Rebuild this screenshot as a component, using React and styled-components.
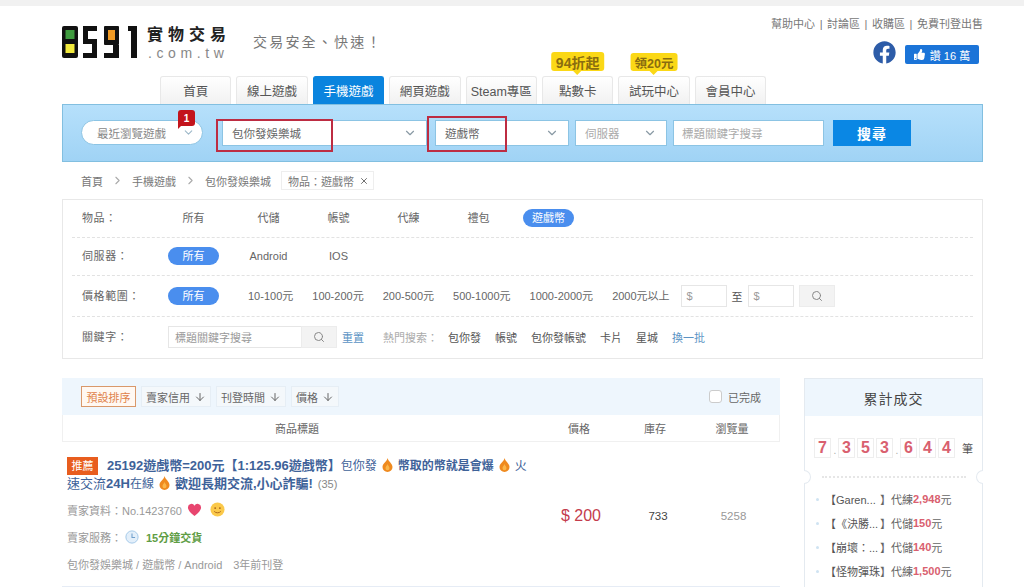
import styled, { createGlobalStyle } from "styled-components";
import { ArrowDown, ChevronDown, ChevronRight, Search, X } from "lucide-react";
import { FaFacebook, FaThumbsUp } from "react-icons/fa";

const GlobalStyle = createGlobalStyle`
  html, body {
    margin: 0;
    height: 587px;
    overflow: hidden;
    background: #fff;
    color: #666;
    font-family: "Liberation Sans", "Noto Sans CJK TC", sans-serif;
    font-size: 11px;
  }
  * { box-sizing: border-box; }
`;

const TopStrip = styled.div`
  height: 6px;
  background: #f1f1f1;
`;

const Page = styled.div`
  width: 921px;
  margin-left: 62px;
`;

const Header = styled.header`
  display: flex;
  justify-content: space-between;
  height: 70px;
`;

const Brand = styled.div`
  display: flex;
  padding-top: 20px;
`;

const BrandText = styled.div`
  margin-left: 9px;
  width: 80px;
`;

const BrandName = styled.div`
  font-family: "Liberation Serif", "Noto Sans CJK TC", serif;
  font-size: 16px;
  font-weight: 700;
  line-height: 18px;
  letter-spacing: 5px;
  color: #222;
  white-space: nowrap;
`;

const BrandDomain = styled.div`
  font-size: 14px;
  line-height: 15px;
  margin-top: 2px;
  padding-left: 1px;
  letter-spacing: 4.6px;
  color: #888;
  white-space: nowrap;
`;

const Slogan = styled.div`
  margin: 6px 0 0 26px;
  font-size: 14px;
  line-height: 20px;
  letter-spacing: 2.2px;
  color: #777;
  white-space: nowrap;
`;

const HeaderRight = styled.div`
  display: flex;
  flex-direction: column;
  align-items: flex-end;
  padding-top: 11px;
`;

const TopLinks = styled.div`
  line-height: 14px;
  color: #777;
  word-spacing: 1.5px;
`;

const Social = styled.div`
  display: flex;
  align-items: center;
  gap: 9px;
  margin: 9px 4px 0 0;
  color: #2d5ca8;
`;

const LikeButton = styled.div`
  display: flex;
  align-items: center;
  justify-content: center;
  gap: 5px;
  width: 74px;
  height: 19px;
  margin-top: 5px;
  border-radius: 2px;
  background: #1b74d8;
  color: #fff;
  font-size: 11px;
`;

const Tabs = styled.nav`
  display: flex;
  gap: 5px;
  height: 28px;
  padding-left: 98px;
`;

const Tab = styled.div`
  position: relative;
  width: 71.4px;
  height: 28px;
  display: flex;
  align-items: center;
  justify-content: center;
  border: 1px solid ${(p) => (p.$active ? "#0a84de" : "#e8e8e8")};
  border-bottom: 0;
  border-radius: 3px 3px 0 0;
  background: ${(p) =>
    p.$active ? "#0a84de" : "linear-gradient(#fff, #f1f1f1)"};
  color: ${(p) => (p.$active ? "#fff" : "#555")};
  font-size: 12.5px;
  white-space: nowrap;
`;

const Promo = styled.div`
  position: absolute;
  left: 50%;
  top: ${(p) => p.$top}px;
  transform: translateX(-50%);
  height: ${(p) => p.$height}px;
  padding: 0 ${(p) => p.$pad}px;
  display: flex;
  align-items: center;
  border-radius: 3px;
  background: #fbd816;
  color: #8a6d10;
  font-size: ${(p) => p.$size}px;
  font-weight: 700;
  white-space: nowrap;

  &::after {
    content: "";
    position: absolute;
    left: 50%;
    bottom: -4px;
    margin-left: -4px;
    border-style: solid;
    border-width: 4px 4px 0;
    border-color: #fbd816 transparent transparent;
  }
`;

const SearchBar = styled.div`
  height: 58px;
  display: flex;
  align-items: flex-start;
  padding: 15px 0 0 18px;
  border: 1px solid #82bfe0;
  background: linear-gradient(#b6e0fb, #a0d3f5);
`;

const RecentSelect = styled.div`
  position: relative;
  width: 122px;
  height: 25px;
  display: flex;
  align-items: center;
  justify-content: space-between;
  padding: 0 7px 0 15px;
  margin-right: 19px;
  border: 1px solid #8cc4e4;
  border-radius: 13px;
  background: #fff;
  color: #888;
  font-size: 11.5px;
`;

const RecentBadge = styled.span`
  position: absolute;
  top: -11px;
  right: 7px;
  width: 17px;
  height: 16px;
  display: flex;
  align-items: center;
  justify-content: center;
  border-radius: 3px 3px 3px 0;
  background: #c3141c;
  color: #fff;
  font-size: 10px;
  font-weight: 700;

  &::after {
    content: "";
    position: absolute;
    left: 0;
    bottom: -3px;
    border-style: solid;
    border-width: 3px 3px 0 0;
    border-color: #c3141c transparent transparent;
  }
`;

const SelectBox = styled.div`
  position: relative;
  width: ${(p) => p.$width}px;
  height: 26px;
  display: flex;
  align-items: center;
  justify-content: space-between;
  margin-right: ${(p) => p.$gap}px;
  padding: 0 9px 0 9px;
  border: 1px solid #8cc4e4;
  background: #fff;
  color: ${(p) => (p.$muted ? "#aaa" : "#666")};
  font-size: 11.5px;

  svg {
    color: #8a9aa5;
  }
`;

const Annotation = styled.span`
  position: absolute;
  left: ${(p) => p.$left}px;
  top: ${(p) => p.$top}px;
  width: ${(p) => p.$width}px;
  height: ${(p) => p.$height}px;
  border: 2px solid #bd2c42;
  pointer-events: none;
`;

const KeywordBox = styled.div`
  width: 151px;
  height: 26px;
  display: flex;
  align-items: center;
  padding-left: 8px;
  margin-right: 9px;
  border: 1px solid #8cc4e4;
  background: #fff;
  color: #aaa;
  font-size: 11.5px;
`;

const SearchButton = styled.div`
  width: 78px;
  height: 26px;
  display: flex;
  align-items: center;
  justify-content: center;
  background: #0a87e4;
  color: #fff;
  font-size: 14px;
  font-weight: 700;
  letter-spacing: 1px;
`;

const Crumbs = styled.div`
  height: 37px;
  display: flex;
  align-items: center;
  padding-left: 19px;
  color: #777;
`;

const CrumbSep = styled(ChevronRight)`
  margin: 0 8px;
  color: #aaa;
`;

const CrumbChip = styled.div`
  display: flex;
  align-items: center;
  gap: 5px;
  height: 19px;
  margin-left: 10px;
  padding: 0 4px 0 6px;
  border: 1px solid #eee;
  color: #777;

  svg {
    color: #555;
  }
`;

const FilterPanel = styled.section`
  height: 160px;
  padding: 0 9px;
  border: 1px solid #e8e8e8;
`;

const FilterRow = styled.div`
  height: ${(p) => p.$height}px;
  display: flex;
  align-items: center;
  padding-bottom: ${(p) => (p.$last ? "2px" : "1px")};
  border-bottom: ${(p) => (p.$last ? "0" : "1px dashed #e2e2e2")};
`;

const FilterLabel = styled.div`
  width: 96px;
  flex: none;
  margin-bottom: 2px;
  padding-left: 10px;
  color: #666;
  letter-spacing: 0.6px;
`;

const Options = styled.div`
  display: flex;
  align-items: center;
  gap: 19px;

  & > :first-child {
    margin-right: ${(p) => p.$lead}px;
  }
`;

const Option = styled.div`
  min-width: ${(p) => (p.$compact ? "0" : "51px")};
  height: 18px;
  line-height: 18px;
  text-align: center;
  white-space: nowrap;
  border-radius: 9px;
  background: ${(p) => (p.$active ? "#4a8eee" : "transparent")};
  color: ${(p) => (p.$active ? "#fff" : "#666")};
`;

const PriceInput = styled.div`
  width: 46px;
  height: 22px;
  display: flex;
  align-items: center;
  padding-left: 5px;
  border: 1px solid #e6e6e6;
  color: #999;
`;

const PriceRange = styled.div`
  display: flex;
  align-items: center;
  gap: 5px;
  margin-left: -8px;
  color: #555;
`;

const IconButton = styled.div`
  width: 36px;
  height: 22px;
  display: flex;
  align-items: center;
  justify-content: center;
  background: #f3f3f3;
  border: 1px solid #ececec;
  color: #888;
`;

const KeywordField = styled.div`
  width: 133px;
  height: 22px;
  display: flex;
  align-items: center;
  padding-left: 6px;
  border: 1px solid #e6e6e6;
  border-right: 0;
  color: #999;
`;

const TextLink = styled.span`
  color: ${(p) => (p.$tone === "blue" ? "#5b93c4" : p.$tone === "muted" ? "#aaa" : "#555")};
  margin-left: ${(p) => p.$gap}px;
  white-space: nowrap;
`;

const Content = styled.div`
  display: flex;
  justify-content: space-between;
  margin-top: 19px;
`;

const Listing = styled.main`
  width: 718px;
`;

const SortBar = styled.div`
  height: 37px;
  display: flex;
  align-items: center;
  padding: 0 19px;
  gap: 5px;
  background: #eef6fd;
`;

const SortButton = styled.div`
  height: 21px;
  display: flex;
  align-items: center;
  gap: 4px;
  padding: 0 ${(p) => (p.$active ? "4.5px" : "4px")};
  border: 1px solid ${(p) => (p.$active ? "#d9986a" : "#e6eef5")};
  background: ${(p) => (p.$active ? "#fff8f2" : "#f4f8fb")};
  color: ${(p) => (p.$active ? "#e0824a" : "#666")};
  white-space: nowrap;
`;

const DoneCheck = styled.label`
  display: flex;
  align-items: center;
  gap: 6px;
  margin-left: auto;
  color: #666;
`;

const CheckBox = styled.span`
  width: 13px;
  height: 13px;
  border: 1px solid #ccc;
  border-radius: 3px;
  background: #fff;
`;

const Columns = styled.div`
  display: grid;
  grid-template-columns: 468px 96px 56px 98px;
  height: 27px;
  align-items: center;
  text-align: center;
  border: 1px solid #f0f0f0;
  border-top: 0;
  color: #666;
`;

const ItemRow = styled.article`
  display: grid;
  grid-template-columns: 468px 96px 56px 98px;
  height: 145px;
  padding-top: 15px;
  border-bottom: 1px solid #e6ecf5;
`;

const ItemMain = styled.div`
  padding-left: 5px;
`;

const ItemTitle = styled.div`
  font-size: 13px;
  line-height: 18px;
  font-weight: 700;
  color: #3e6299;
`;

const HotTag = styled.span`
  display: inline-block;
  width: 31px;
  height: 18px;
  margin-right: 9px;
  text-align: center;
  font-size: 11px;
  line-height: 18px;
  font-weight: 400;
  background: #e85d1e;
  color: #fff;
  vertical-align: top;
`;

const TitlePart = styled.span`
  font-size: ${(p) => p.$size || 12}px;
  font-weight: ${(p) => (p.$bold ? 700 : 400)};
`;

const ReviewCount = styled.span`
  font-size: 11px;
  font-weight: 400;
  color: #888;
  margin-left: 5px;
`;

const Flame = styled.svg`
  width: 11px;
  height: 14px;
  margin: 0 5px;
  vertical-align: -2px;
`;

const MetaRow = styled.div`
  display: flex;
  align-items: center;
  height: 27px;
  color: #999;
`;

const SellerRow = styled(MetaRow)`
  margin-top: 3px;
`;

const GreenText = styled.span`
  color: #5f9d45;
  font-weight: 700;
  margin-left: 7px;
`;

const RowIcon = styled.svg`
  width: ${(p) => p.$size}px;
  height: ${(p) => p.$size}px;
  margin-left: ${(p) => p.$gap}px;
`;

const ItemCell = styled.div`
  display: flex;
  align-items: center;
  justify-content: center;
  height: 118px;
  padding-left: ${(p) => p.$shift}px;
  color: ${(p) => p.$color};
  font-size: ${(p) => p.$size}px;
`;

const Side = styled.aside`
  position: relative;
  width: 179px;
  height: 209px;
  border: 1px solid #e4eaf0;
  border-bottom: 0;
`;

const SideHead = styled.div`
  height: 37px;
  display: flex;
  align-items: center;
  justify-content: center;
  background: #eef6fd;
  color: #444;
  font-size: 14px;
  letter-spacing: 1px;
`;

const Counter = styled.div`
  display: flex;
  align-items: center;
  height: 61px;
  padding: 2px 0 0 9px;
`;

const Digit = styled.span`
  width: 17px;
  height: 20px;
  margin-right: 2px;
  display: flex;
  align-items: center;
  justify-content: center;
  border: 1px solid #eee;
  color: #d9606f;
  font-size: 16px;
  font-weight: 700;
`;

const Comma = styled.span`
  width: 4px;
  margin: 0 1px 0 0;
  text-align: center;
  color: #aaa;
  font-size: 10px;
  line-height: 10px;
  align-self: flex-end;
  padding-bottom: 21px;
`;

const CounterUnit = styled.span`
  margin-left: 5px;
  color: #555;
`;

const Notch = styled.span`
  position: absolute;
  top: 91px;
  ${(p) => p.$side}: -1px;
  width: 7px;
  height: 14px;
  background: #fff;
  border: 1px solid #e4eaf0;
  border-${(p) => p.$side}: 0;
  border-radius: ${(p) => (p.$side === "left" ? "0 7px 7px 0" : "7px 0 0 7px")};
`;

const DealList = styled.ul`
  list-style: none;
  margin: 0;
  padding: 10px 0 0 11px;
  position: relative;

  &::before {
    content: "";
    position: absolute;
    top: -1px;
    left: 17px;
    right: 16px;
    border-top: 2px dotted #e6e6e6;
  }
`;

const Deal = styled.li`
  height: 24px;
  display: flex;
  align-items: center;
  color: #666;
  white-space: nowrap;
  text-spacing-trim: space-all;

  &::before {
    content: "";
    width: 3px;
    height: 3px;
    margin-right: 6px;
    border-radius: 50%;
    background: #cfe3f2;
  }
`;

const DealName = styled.span`
  width: 55px;
  flex: none;
  color: #555;
`;

const DealPrice = styled.b`
  color: #d9606f;
`;

const LOGO_FILL = "#111";

const Logo = () => (
  <svg width="76" height="32" viewBox="0 0 76 32" role="img" aria-label="8591">
    <rect width="16" height="32" rx="2" fill={LOGO_FILL} />
    <rect x="3.500" y="4" width="9" height="9" fill="#3f9b3f" />
    <rect x="3.500" y="18" width="9" height="9" fill="#f2ea3c" />
    <path d="M21 0h14v5h-9v8h9v19H21v-5h9v-9h-9z" fill={LOGO_FILL} />
    <rect x="42" width="15" height="19" rx="1" fill={LOGO_FILL} />
    <rect x="46" y="4" width="7" height="10" fill="#f09a24" />
    <rect x="51" y="19" width="6" height="13" fill={LOGO_FILL} />
    <rect x="42" y="27" width="15" height="5" fill={LOGO_FILL} />
    <path d="M66 0h9v32h-6V5h-3z" fill={LOGO_FILL} />
  </svg>
);

const FlameIcon = () => (
  <Flame viewBox="0 0 11 14">
    <path
      d="M5.500 0C6 3 10.500 5.500 10.500 9a5 5 0 0 1-10 0C.5 5.500 5 3.500 5.500 0z"
      fill="#ef8a1f"
    />
    <path d="M5.500 6c.3 1.500 2 2.600 2 4.300a2 2 0 0 1-4 0C3.500 8.600 5.200 7.500 5.500 6z" fill="#fbb64a" />
  </Flame>
);

const categories = ["代儲", "帳號", "代練", "禮包"];
const priceRanges = ["10-100元", "100-200元", "200-500元", "500-1000元", "1000-2000元", "2000元以上"];
const deals = [
  ["【Garen...", "】代練", "2,948"],
  ["【《決勝...", "】代儲", "150"],
  ["【崩壞：...", "】代儲", "140"],
  ["【怪物彈珠", "】代練", "1,500"],
];

const App = () => {
  return (
    <>
      <GlobalStyle />
      <TopStrip />
      <Page>
        <Header>
          <Brand>
            <Logo />
            <BrandText>
              <BrandName>實物交易</BrandName>
              <BrandDomain>.com.tw</BrandDomain>
            </BrandText>
            <Slogan>交易安全、快速！</Slogan>
          </Brand>
          <HeaderRight>
            <TopLinks>幫助中心 | 討論區 | 收購區 | 免費刊登出售</TopLinks>
            <Social>
              <FaFacebook size={23} />
              <LikeButton>
                <FaThumbsUp size={11} />讚 16 萬
              </LikeButton>
            </Social>
          </HeaderRight>
        </Header>

        <Tabs>
          <Tab>首頁</Tab>
          <Tab>線上遊戲</Tab>
          <Tab $active>手機遊戲</Tab>
          <Tab>網頁遊戲</Tab>
          <Tab>Steam專區</Tab>
          <Tab>
            點數卡
            <Promo $top={-25} $height={19} $pad={5} $size={14}>94折起</Promo>
          </Tab>
          <Tab>
            試玩中心
            <Promo $top={-24} $height={18} $pad={4} $size={12.5}>領20元</Promo>
          </Tab>
          <Tab>會員中心</Tab>
        </Tabs>

        <SearchBar>
          <RecentSelect>
            最近瀏覽遊戲
            <ChevronDown size={13} color="#9db8c8" />
            <RecentBadge>1</RecentBadge>
          </RecentSelect>
          <SelectBox $width={205} $gap={8}>
            包你發娛樂城
            <ChevronDown size={14} />
            <Annotation $left={-7} $top={-2} $width={117} $height={33} />
          </SelectBox>
          <SelectBox $width={134} $gap={6}>
            遊戲幣
            <ChevronDown size={14} />
            <Annotation $left={-9} $top={-5} $width={80} $height={36} />
          </SelectBox>
          <SelectBox $width={92} $gap={6} $muted>
            伺服器
            <ChevronDown size={14} />
          </SelectBox>
          <KeywordBox>標題關鍵字搜尋</KeywordBox>
          <SearchButton>搜尋</SearchButton>
        </SearchBar>

        <Crumbs>
          首頁
          <CrumbSep size={13} />
          手機遊戲
          <CrumbSep size={13} />
          包你發娛樂城
          <CrumbChip>
            物品：遊戲幣
            <X size={10} />
          </CrumbChip>
        </Crumbs>

        <FilterPanel>
          <FilterRow $height={38}>
            <FilterLabel>物品：</FilterLabel>
            <Options $lead={5}>
              <Option>所有</Option>
              {categories.map((name) => (
                <Option key={name}>{name}</Option>
              ))}
              <Option $active>遊戲幣</Option>
            </Options>
          </FilterRow>
          <FilterRow $height={38}>
            <FilterLabel>伺服器：</FilterLabel>
            <Options $lead={5}>
              <Option $active>所有</Option>
              <Option>Android</Option>
              <Option>IOS</Option>
            </Options>
          </FilterRow>
          <FilterRow $height={41}>
            <FilterLabel>價格範圍：</FilterLabel>
            <Options $lead={10}>
              <Option $active>所有</Option>
              {priceRanges.map((range) => (
                <Option key={range} $compact>
                  {range}
                </Option>
              ))}
              <PriceRange>
                <PriceInput>$</PriceInput>
                至
                <PriceInput>$</PriceInput>
                <IconButton>
                  <Search size={12} />
                </IconButton>
              </PriceRange>
            </Options>
          </FilterRow>
          <FilterRow $height={41} $last>
            <FilterLabel>關鍵字：</FilterLabel>
            <KeywordField>標題關鍵字搜尋</KeywordField>
            <IconButton>
              <Search size={12} />
            </IconButton>
            <TextLink $tone="blue" $gap={5}>重置</TextLink>
            <TextLink $tone="muted" $gap={19}>熱門搜索：</TextLink>
            <TextLink $gap={10}>包你發</TextLink>
            <TextLink $gap={14}>帳號</TextLink>
            <TextLink $gap={14}>包你發帳號</TextLink>
            <TextLink $gap={14}>卡片</TextLink>
            <TextLink $gap={14}>星城</TextLink>
            <TextLink $tone="blue" $gap={14}>換一批</TextLink>
          </FilterRow>
        </FilterPanel>

        <Content>
          <Listing>
            <SortBar>
              <SortButton $active>預設排序</SortButton>
              <SortButton>賣家信用<ArrowDown size={12} /></SortButton>
              <SortButton>刊登時間<ArrowDown size={12} /></SortButton>
              <SortButton>價格<ArrowDown size={12} /></SortButton>
              <DoneCheck>
                <CheckBox />
                已完成
              </DoneCheck>
            </SortBar>
            <Columns>
              <span>商品標題</span>
              <span>價格</span>
              <span>庫存</span>
              <span>瀏覽量</span>
            </Columns>
            <ItemRow>
              <ItemMain>
                <ItemTitle>
                  <HotTag>推薦</HotTag>
                  25192遊戲幣=200元【1:125.96遊戲幣】<TitlePart>包你發</TitlePart>
                  <FlameIcon />
                  <TitlePart $bold>幣取的幣就是會爆</TitlePart>
                  <FlameIcon />
                  <TitlePart>火</TitlePart>
                  <TitlePart $size={13}>速交流</TitlePart>
                  24H<TitlePart>在線</TitlePart>
                  <FlameIcon />
                  歡迎長期交流,小心詐騙!
                  <ReviewCount>(35)</ReviewCount>
                </ItemTitle>
                <SellerRow>
                  賣家資料：No.1423760
                  <RowIcon $size={15} $gap={5} viewBox="0 0 16 16">
                    <path d="M8 15C3 11 1 8.500 1 5.500A3.700 3.700 0 0 1 8 4a3.700 3.700 0 0 1 7 1.500C15 8.500 13 11 8 15z" fill="#e8456f" />
                  </RowIcon>
                  <RowIcon $size={15} $gap={8} viewBox="0 0 16 16">
                    <circle cx="8" cy="8" r="7.500" fill="#fbc94a" />
                    <circle cx="5.500" cy="6.500" r="1" fill="#a8641c" />
                    <circle cx="10.500" cy="6.500" r="1" fill="#a8641c" />
                    <path d="M4.500 10c1.500 2 5.500 2 7 0" fill="none" stroke="#a8641c" strokeWidth="1" />
                  </RowIcon>
                </SellerRow>
                <MetaRow>
                  賣家服務：
                  <RowIcon $size={14} $gap={3} viewBox="0 0 16 16">
                    <circle cx="8" cy="8" r="7" fill="#e3effa" stroke="#9cc3e6" />
                    <path d="M8 4v4.500h3.500" fill="none" stroke="#6f9fcb" strokeWidth="1.200" />
                  </RowIcon>
                  <GreenText>15分鐘交貨</GreenText>
                </MetaRow>
                <MetaRow>包你發娛樂城 / 遊戲幣 / Android　3年前刊登</MetaRow>
              </ItemMain>
              <ItemCell $color="#c43c4c" $size={16} $shift={6}>$ 200</ItemCell>
              <ItemCell $color="#444" $size={11.5} $shift={8}>733</ItemCell>
              <ItemCell $color="#999" $size={11.5} $shift={5}>5258</ItemCell>
            </ItemRow>
          </Listing>

          <Side>
            <SideHead>累計成交</SideHead>
            <Counter>
              <Digit>7</Digit>
              <Comma>.</Comma>
              <Digit>3</Digit>
              <Digit>5</Digit>
              <Digit>3</Digit>
              <Comma>.</Comma>
              <Digit>6</Digit>
              <Digit>4</Digit>
              <Digit>4</Digit>
              <CounterUnit>筆</CounterUnit>
            </Counter>
            <Notch $side="left" />
            <Notch $side="right" />
            <DealList>
              {deals.map(([name, kind, price]) => (
                <Deal key={name}>
                  <DealName>{name}</DealName>
                  {kind}
                  <DealPrice>{price}</DealPrice>元
                </Deal>
              ))}
            </DealList>
          </Side>
        </Content>
      </Page>
    </>
  );
};

export default App;
